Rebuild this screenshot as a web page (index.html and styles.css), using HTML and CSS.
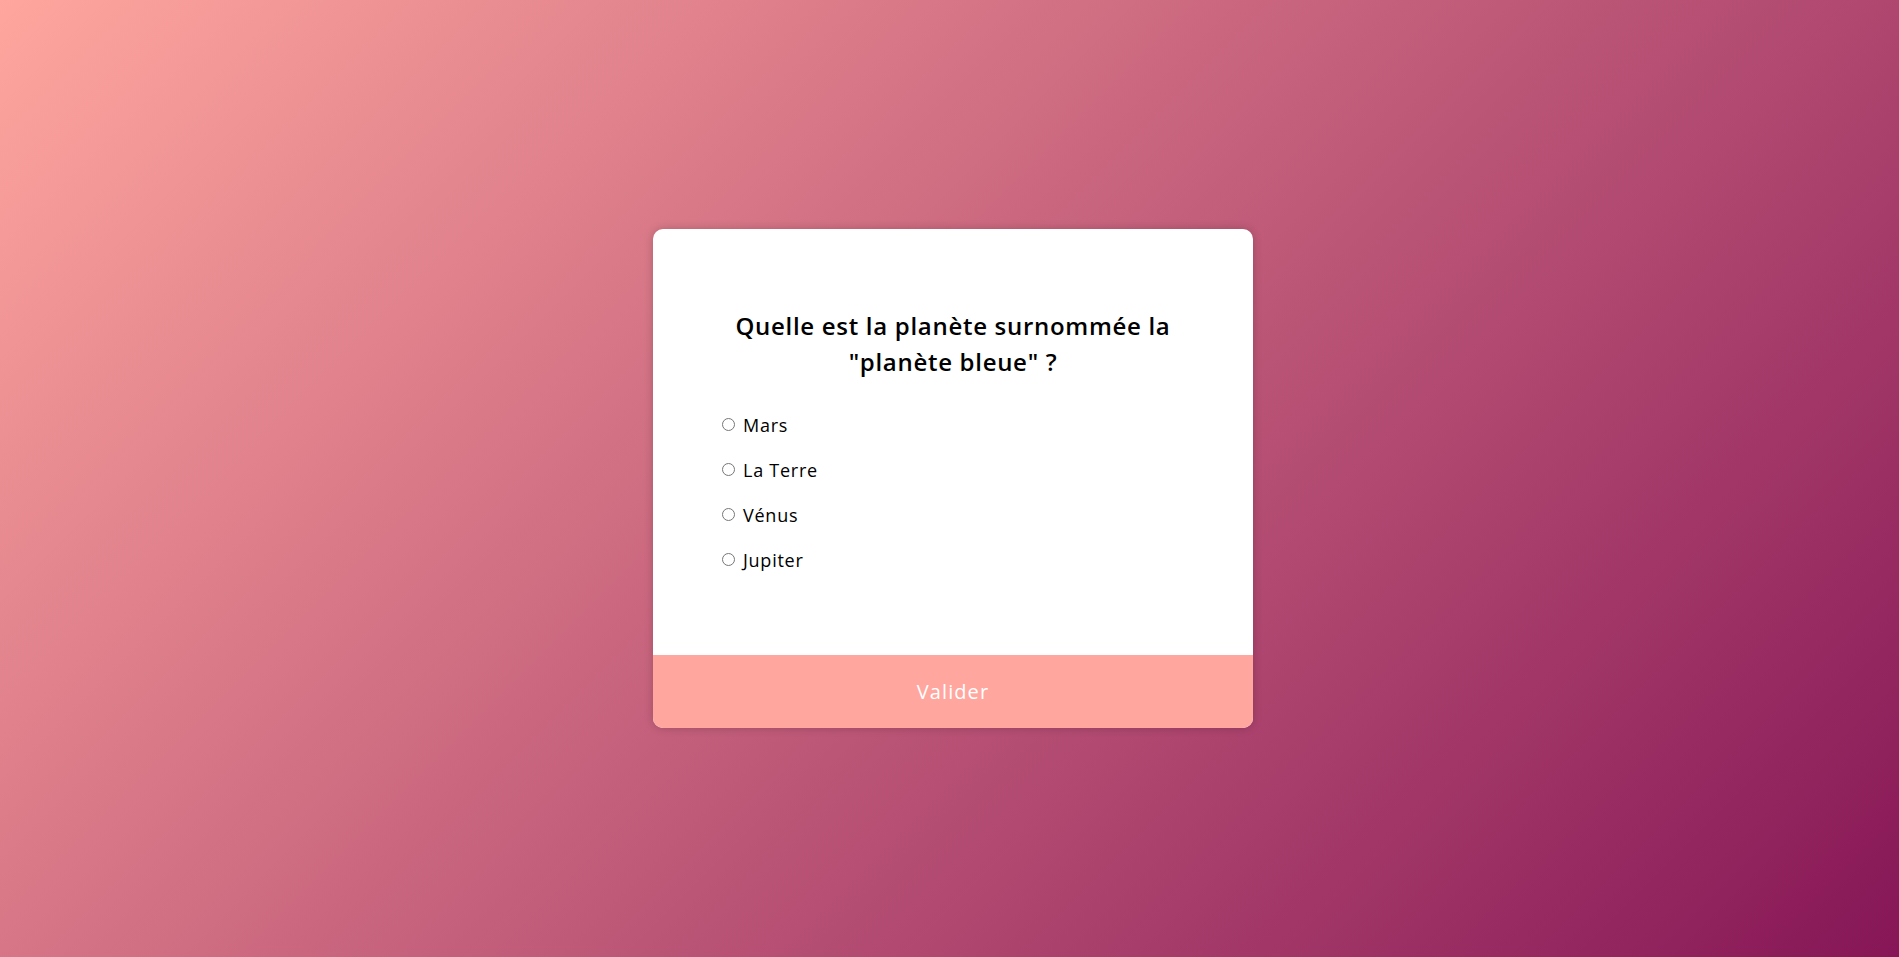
FILE: index.html
```html
<!DOCTYPE html>
<html lang="fr">
<head>
<meta charset="utf-8">
<title>Quiz</title>
<link rel="stylesheet" href="styles.css">
</head>
<body>
<main class="page">
  <form class="quiz-card">
    <div class="quiz-body">
      <h2 class="question">Quelle est la planète surnommée la "planète bleue" ?</h2>
      <ul class="answers">
        <li class="answer"><label class="answer-label"><input type="radio" name="q" class="radio"> <span>Mars</span></label></li>
        <li class="answer"><label class="answer-label"><input type="radio" name="q" class="radio"> <span>La Terre</span></label></li>
        <li class="answer"><label class="answer-label"><input type="radio" name="q" class="radio"> <span>Vénus</span></label></li>
        <li class="answer"><label class="answer-label"><input type="radio" name="q" class="radio"> <span>Jupiter</span></label></li>
      </ul>
    </div>
    <button type="button" class="submit">Valider</button>
  </form>
</main>
</body>
</html>
```
FILE: styles.css
```css
* { box-sizing: border-box; }
html, body { margin: 0; height: 100%; }
body {
  font-family: "Open Sans", "Liberation Sans", sans-serif;
  background: linear-gradient(135deg, #ffa69e 0%, #861657 100%);
}
.page {
  height: 100%;
  display: flex;
  align-items: center;
  justify-content: center;
  padding-left: 7px;
}
.quiz-card {
  width: 600px;
  background: #fff;
  border-radius: 10px;
  overflow: hidden;
  box-shadow: 0 0 10px rgba(0, 0, 0, 0.2);
  display: flex;
  flex-direction: column;
}
.quiz-body {
  padding: 79px 64px 73px;
}
.question {
  margin: 0 0 22px;
  font-size: 24px;
  font-weight: 600;
  line-height: 36px;
  letter-spacing: 0.7px;
  text-align: center;
  color: #000;
  padding: 0;
}
.answers {
  list-style: none;
  margin: 0;
  padding: 0;
}
.answer {
  height: 45px;
  display: flex;
  align-items: center;
}
.answer-label {
  display: flex;
  align-items: center;
  font-size: 18px;
  letter-spacing: 0.75px;
  color: #000;
}
.radio {
  margin: 0 8px 0 5px;
  width: 13px;
  height: 13px;
}
.submit {
  height: 73px;
  border: 0;
  background: #ffa69e;
  color: #fff;
  font-family: inherit;
  font-size: 20px;
  letter-spacing: 1.1px;
  cursor: pointer;
  padding: 0;
}
```
